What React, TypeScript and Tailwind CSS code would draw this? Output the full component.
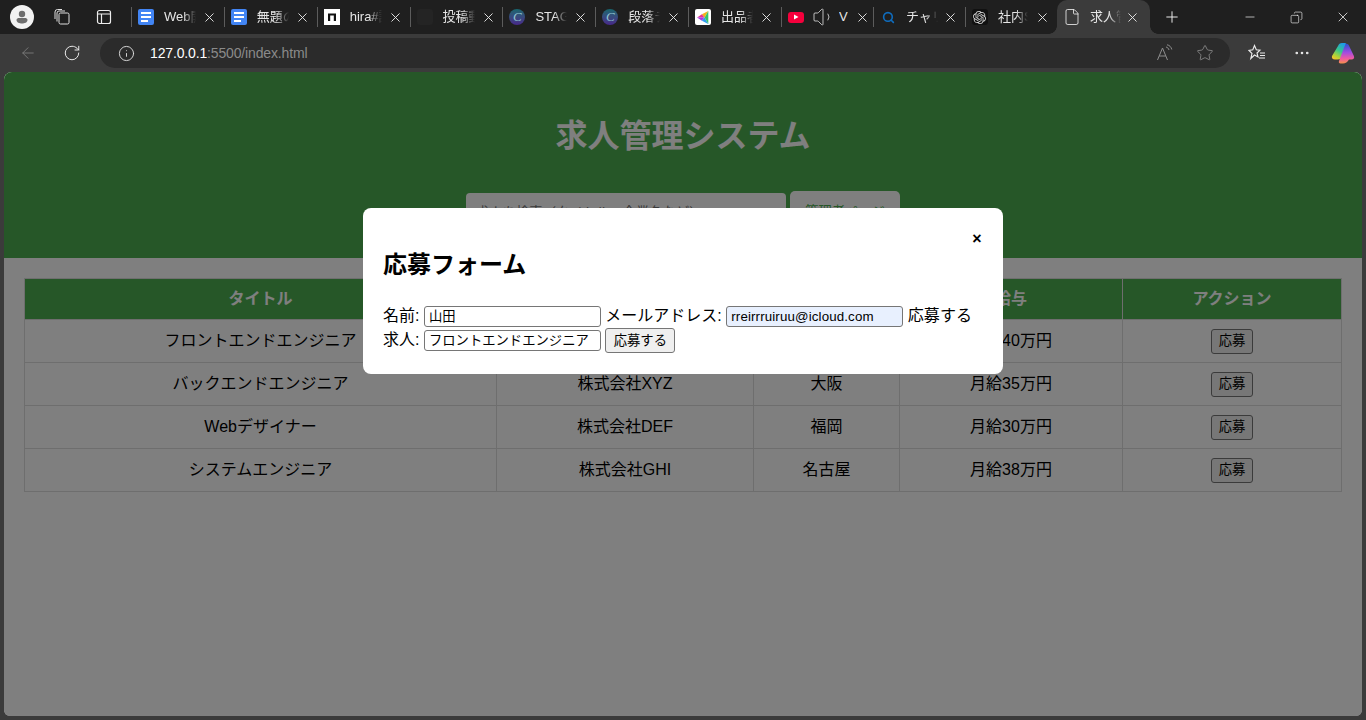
import { ArrowLeft, Copy, File, Info, Minus, MoreHorizontal, Plus, RotateCw, Search, Star, Volume1, X } from "lucide-react";
import { SiOpenai } from "react-icons/si";
import type { ReactNode } from "react";

const font = "font-['Liberation_Sans','Noto_Sans_CJK_JP',sans-serif]";

const DocsIcon = () => (
  <span className="w-4 h-4 rounded-[2px] bg-[#4285f4] flex flex-col justify-center gap-[2px] pl-[3px] shrink-0">
    <span className="block h-[2px] w-[10px] bg-white" />
    <span className="block h-[2px] w-[10px] bg-white" />
    <span className="block h-[2px] w-[7px] bg-white" />
  </span>
);

const CircleC = () => (
  <span className="w-4 h-4 rounded-full bg-gradient-to-b from-[#14666e] to-[#46268a] flex items-center justify-center text-[13px] italic text-[#8fc4d0] font-['Liberation_Serif',serif] shrink-0">
    C
  </span>
);

const tabs: { icon: ReactNode; title: string }[] = [
  { icon: <DocsIcon />, title: "Web開発" },
  { icon: <DocsIcon />, title: "無題のドキュメント" },
  {
    icon: (
      <span className="w-4 h-4 bg-white flex items-center justify-center shrink-0">
        <svg width="10" height="10" viewBox="0 0 10 10">
          <path d="M1 9V1.500h8V9H6.800V3.600H3.200V9z" fill="#111" />
        </svg>
      </span>
    ),
    title: "hira#記事",
  },
  { icon: <span className="w-4 h-4 rounded-[3px] bg-[#242424] shrink-0" />, title: "投稿動画" },
  { icon: <CircleC />, title: "STAGE" },
  { icon: <CircleC />, title: "段落テキスト" },
  {
    icon: (
      <span className="w-4 h-4 rounded-[2px] bg-white flex items-center justify-center shrink-0">
        <svg width="15" height="15" viewBox="0 0 14 14">
          <path d="M11.500 1 5.500 4 8 7z" fill="#f5b21a" />
          <path d="M5.500 4 1 7 8 7z" fill="#e8368f" />
          <path d="M1 7 5.500 10 8 7z" fill="#a23be8" />
          <path d="M5.500 10l6 3L8 7z" fill="#2f9bf0" />
          <path d="M11.500 1 8 7l3.500 6z" fill="#36c46b" />
        </svg>
      </span>
    ),
    title: "出品者",
  },
];

const Close = () => <X className="w-[15px] h-[15px] text-[#e6e6e6] shrink-0" strokeWidth={1.500} />;

function Tab({ icon, title }: { icon: ReactNode; title: string }) {
  return (
    <div className="w-[92.85px] h-[34px] flex items-center shrink-0">
      <span className="w-px h-5 bg-[#5c5c5c] mr-[6px] shrink-0" />
      {icon}
      <span className="ml-[10px] w-[32px] overflow-hidden whitespace-nowrap text-[13px] text-[#e6e6e6] [mask-image:linear-gradient(to_right,black_60%,transparent)]">
        {title}
      </span>
      <span className="ml-[6px]">
        <Close />
      </span>
    </div>
  );
}

function BrowserChrome() {
  return (
    <div className="shrink-0 bg-[#3b3b3b]">
      <div className="h-[34px] bg-[#1f1f1f] flex items-center text-white">
        <div className="w-[131px] flex items-center shrink-0 pl-[10px]">
          <span className="w-6 h-6 rounded-full bg-[#f2f2f2] flex items-center justify-center shrink-0">
            <svg width="16" height="16" viewBox="0 0 16 16">
              <circle cx="8" cy="5" r="3.200" fill="#6e6e6e" />
              <path d="M2.500 11c0-1.500 1.300-2 3-2h5c1.700 0 3 .5 3 2 0 2.500-3 3.500-5.500 3.500S2.500 13.500 2.500 11z" fill="#6e6e6e" />
            </svg>
          </span>
          <svg width="18" height="18" viewBox="0 0 18 18" className="ml-[19px] shrink-0" fill="none" stroke="#e0e0e0" strokeWidth="1">
            <rect x="6" y="5" width="10" height="11" rx="1.500" />
            <path d="M4 13.500 V5 a2 2 0 0 1 2-2 h6" />
            <path d="M2 11 V4 a2.500 2.500 0 0 1 2.500-2.500 H9" />
          </svg>
          <svg width="16" height="16" viewBox="0 0 16 16" className="ml-[25px] shrink-0" fill="none" stroke="#ededed" strokeWidth="1.200">
            <rect x="1.500" y="1.500" width="13" height="13" rx="2" />
            <path d="M1.500 5h13M5.500 5v9.500" />
          </svg>
        </div>

        {tabs.map((t) => (
          <Tab key={t.title} icon={t.icon} title={t.title} />
        ))}

        {/* youtube tab */}
        <div className="w-[92px] h-[34px] flex items-center shrink-0">
          <span className="w-px h-5 bg-[#5c5c5c] shrink-0" />
          <span className="ml-[6px] w-4 h-[11px] rounded-[3px] bg-[#f5003c] flex items-center justify-center shrink-0">
            <svg width="6" height="6" viewBox="0 0 6 6">
              <path d="M1 .5 5.500 3 1 5.500z" fill="#fff" />
            </svg>
          </span>
          <Volume1 className="w-[24px] h-[24px] ml-[8px] text-[#e6e6e6] shrink-0" strokeWidth={0.800} />
          <span className="ml-[3px] w-[9px] overflow-hidden text-[13px] text-[#e6e6e6]">V</span>
          <span className="ml-[7px]">
            <Close />
          </span>
        </div>

        {/* search tab */}
        <div className="w-[92px] h-[34px] flex items-center shrink-0">
          <span className="w-px h-5 bg-[#5c5c5c] shrink-0" />
          <Search className="w-[13px] h-[13px] ml-[8px] text-[#0f6cbd] shrink-0" strokeWidth={3} />
          <span className="ml-[11px] w-[32px] overflow-hidden whitespace-nowrap text-[13px] text-[#e6e6e6] [mask-image:linear-gradient(to_right,black_60%,transparent)]">
            チャリロト
          </span>
          <span className="ml-[5px]">
            <Close />
          </span>
        </div>

        {/* chatgpt tab */}
        <div className="w-[92px] h-[34px] flex items-center shrink-0">
          <span className="w-px h-5 bg-[#5c5c5c] shrink-0" />
          <span className="ml-[6px] w-4 h-4 rounded-[3px] bg-[#111] flex items-center justify-center shrink-0">
            <SiOpenai className="w-[13px] h-[13px] text-[#d8d8d8]" />
          </span>
          <span className="ml-[10px] w-[30px] overflow-hidden whitespace-nowrap text-[13px] text-[#e6e6e6] [mask-image:linear-gradient(to_right,black_60%,transparent)]">
            社内SE
          </span>
          <span className="ml-[7px]">
            <Close />
          </span>
        </div>

        {/* active tab */}
        <div className="relative w-[93px] h-[34px] bg-[#3b3b3b] rounded-t-[10px] flex items-center shrink-0 pl-[6px]">
          <span className="absolute -left-[8px] bottom-0 w-[8px] h-[8px] bg-[radial-gradient(circle_at_0_0,#1f1f1f_7.500px,#3b3b3b_8px)]" />
          <span className="absolute -right-[8px] bottom-0 w-[8px] h-[8px] bg-[radial-gradient(circle_at_100%_0,#1f1f1f_7.500px,#3b3b3b_8px)]" />
          <File className="w-[18px] h-[18px] text-[#f0f0f0] shrink-0" strokeWidth={1.100} />
          <span className="ml-[9px] w-[31px] overflow-hidden whitespace-nowrap text-[13px] text-[#e6e6e6] [mask-image:linear-gradient(to_right,black_60%,transparent)]">
            求人管理
          </span>
          <span className="ml-[4px]">
            <Close />
          </span>
        </div>

        <Plus className="w-[18px] h-[18px] ml-[13px] text-[#f0f0f0] shrink-0" strokeWidth={1.300} />

        <div className="ml-auto flex items-center shrink-0">
          <Minus className="w-[14px] h-[14px] mr-[33px] text-[#f0f0f0]" strokeWidth={1.200} />
          <Copy className="w-[13px] h-[13px] mr-[32px] text-[#f0f0f0] -scale-x-100" strokeWidth={1.200} />
          <X className="w-[16px] h-[16px] mr-[15px] text-[#f0f0f0]" strokeWidth={1.200} />
        </div>
      </div>

      <div className="h-[38px] flex items-center">
        <ArrowLeft className="w-[18px] h-[18px] ml-[19px] text-[#7c7c7c] shrink-0" strokeWidth={1.200} />
        <RotateCw className="w-[18px] h-[18px] ml-[26px] text-[#ededed] shrink-0" strokeWidth={1.300} />
        <div className="ml-[19px] w-[1130px] h-[30px] rounded-full bg-[#2b2b2b] flex items-center shrink-0">
          <Info className="w-[17px] h-[17px] ml-[18px] text-[#e0e0e0] shrink-0" strokeWidth={1.300} />
          <span className="ml-[15px] text-[14px] tracking-[-0.15px]">
            <span className="text-white">127.0.0.1</span>
            <span className="text-[#8a8a8a]">:5500/index.html</span>
          </span>
          <svg width="18" height="18" viewBox="0 0 18 18" className="ml-auto shrink-0" fill="none" stroke="#8e8e8e" strokeWidth="1">
            <path d="M1.500 16 6.500 4l5 12M3.300 12h6.400" />
            <path d="M10 3c1.500.3 2.500 1.300 3 3M11 .8c2.500.4 4.200 2.200 4.800 4.700" />
          </svg>
          <Star className="w-[18px] h-[18px] ml-[22px] mr-[16px] text-[#8e8e8e] shrink-0" strokeWidth={1.100} />
        </div>
        <svg width="18" height="18" viewBox="0 0 18 18" className="ml-[18px] shrink-0" fill="none" stroke="#ededed" strokeWidth="1.100">
          <path d="M6.500 1.500 8.300 5.800 12 6.200 9 9 10 13 6.500 11 2.800 14.500 4 9.500 1 6.400 4.800 5.800z" />
          <path d="M12 9h5M12 11.500h5M11 14h6" />
        </svg>
        <MoreHorizontal className="w-[18px] h-[18px] ml-[27px] text-[#ededed] shrink-0" strokeWidth={1.500} />
        <svg width="24" height="22" viewBox="0 0 24 22" className="ml-[20px] shrink-0">
          <defs>
            <linearGradient id="copA" x1="0.700" y1="0" x2="0.200" y2="1">
              <stop offset="0" stopColor="#1f9be8" />
              <stop offset="0.450" stopColor="#38c88a" />
              <stop offset="0.800" stopColor="#b6d334" />
              <stop offset="1" stopColor="#f5c22e" />
            </linearGradient>
            <linearGradient id="copB" x1="0.500" y1="0" x2="0.500" y2="1">
              <stop offset="0" stopColor="#2a52d0" />
              <stop offset="0.450" stopColor="#a44ce0" />
              <stop offset="0.750" stopColor="#ef5aa0" />
              <stop offset="1" stopColor="#f5914a" />
            </linearGradient>
          </defs>
          <path d="M7 4C7.800 2 9 1 11 1h3c1 0 1.500 1 1.200 2L10.500 15c-.6 1.700-2 2.500-3.500 2.500H4c-2.500 0-3.600-1.800-3-3.600z" fill="url(#copA)" />
          <path d="M14.500 2c1.500-.8 2.800 0 3.400 1.500l5 10.500c.8 2-.3 3.500-2.400 3.500H18c-1.500 2.500-3.500 4-6 4H9.500c-1.500 0-2-1-1.500-2.500L12.500 7z" fill="url(#copB)" />
        </svg>
      </div>
    </div>
  );
}

const jobs = [
  ["フロントエンドエンジニア", "株式会社ABC", "東京", "月給40万円"],
  ["バックエンドエンジニア", "株式会社XYZ", "大阪", "月給35万円"],
  ["Webデザイナー", "株式会社DEF", "福岡", "月給30万円"],
  ["システムエンジニア", "株式会社GHI", "名古屋", "月給38万円"],
];

const inputClass =
  "w-[177px] h-[21px] border border-[#767676] rounded-[3px] px-[4px] text-[13.33px] text-black align-middle";

function Page() {
  return (
    <div className="relative mx-[4px] h-[644px] rounded-t-[8px] rounded-b-[6px] overflow-hidden bg-white text-[16px] text-black">
      <header className="h-[186px] bg-[#4caf50] text-white text-center pt-[45px]">
        <h1 className="text-[32px] leading-[38px] font-bold">求人管理システム</h1>
        <div className="mt-[38px] flex justify-center items-start gap-[4px]">
          <input
            className="w-[320px] h-[38px] bg-white rounded-[4px] px-[10px] text-[13.33px] placeholder:text-[#757575]"
            placeholder="求人を検索（タイトル、企業名など）"
            readOnly
          />
          <button className="-mt-[2px] w-[110px] h-[42px] bg-white rounded-[5px] text-[13.33px] text-[#4caf50]">
            管理者ページ
          </button>
        </div>
      </header>

      <main className="px-[20px] pt-[20px]">
        <table className="w-[1318px] table-fixed border-collapse">
          <thead>
            <tr className="h-[41px] bg-[#4caf50] text-white">
              <th className="w-[472px] border border-[#dddddd]">タイトル</th>
              <th className="w-[257px] border border-[#dddddd]">会社名</th>
              <th className="w-[146px] border border-[#dddddd]">勤務地</th>
              <th className="w-[223px] border border-[#dddddd]">給与</th>
              <th className="border border-[#dddddd]">アクション</th>
            </tr>
          </thead>
          <tbody>
            {jobs.map((job) => (
              <tr key={job[0]} className="h-[43px]">
                {job.map((cell) => (
                  <td key={cell} className="border border-[#dddddd] text-center">
                    {cell}
                  </td>
                ))}
                <td className="border border-[#dddddd] text-center">
                  <button className="w-[42px] h-[25px] bg-[#efefef] border border-[#767676] rounded-[3px] text-[13.33px] align-middle">
                    応募
                  </button>
                </td>
              </tr>
            ))}
          </tbody>
        </table>
      </main>

      {/* modal overlay */}
      <div className="absolute inset-0 bg-black/50">
        <div className="absolute left-[359px] top-[136px] w-[640px] h-[166px] bg-white rounded-[8px] p-[20px]">
          <button className="absolute right-[20px] top-[20px] w-[12px] h-[22px] text-[16px] font-bold leading-[22px]">×</button>
          <h2 className="mt-[19px] text-[24px] leading-[36px] font-bold">応募フォーム</h2>
          <form className="mt-[21px] leading-[24px]">
            <label>名前:</label> <input className={inputClass} defaultValue="山田" readOnly />{" "}
            <label>メールアドレス:</label>{" "}
            <input className={`${inputClass} bg-[#e8f0fe] tracking-[0.13px]`} defaultValue="rreirrruiruu@icloud.com" readOnly />{" "}
            <label className="tracking-[0.1px]">応募する</label>
            <br />
            <label>求人:</label> <input className={inputClass} defaultValue="フロントエンドエンジニア" readOnly />{" "}
            <button type="button" className="w-[70px] h-[25px] bg-[#efefef] border border-[#767676] rounded-[3px] text-[13.33px] align-middle">
              応募する
            </button>
          </form>
        </div>
      </div>
    </div>
  );
}

export default function App() {
  return (
    <div className={`w-[1366px] h-[720px] overflow-hidden bg-[#3b3b3b] ${font}`}>
      <BrowserChrome />
      <Page />
    </div>
  );
}
